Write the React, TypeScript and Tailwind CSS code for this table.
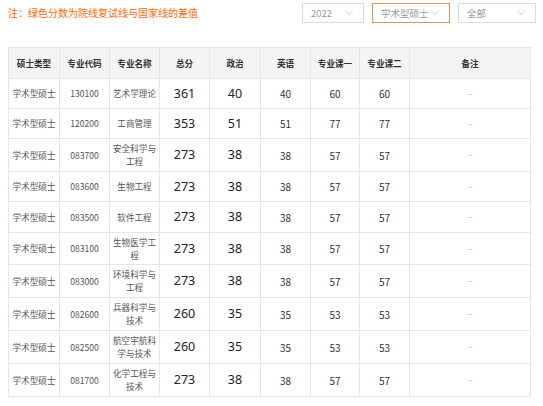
import type { ReactNode } from 'react';

const rows = [
  { code: '130100', name: '艺术学理论', total: 361, pol: 40, eng: 40, c1: 60, c2: 60, h: 'h-[30px]' },
  { code: '120200', name: '工商管理', total: 353, pol: 51, eng: 51, c1: 77, c2: 77, h: 'h-[30px]' },
  { code: '083700', name: '安全科学与工程', total: 273, pol: 38, eng: 38, c1: 57, c2: 57, h: 'h-[33px]' },
  { code: '083600', name: '生物工程', total: 273, pol: 38, eng: 38, c1: 57, c2: 57, h: 'h-[30px]' },
  { code: '083500', name: '软件工程', total: 273, pol: 38, eng: 38, c1: 57, c2: 57, h: 'h-[31px]' },
  { code: '083100', name: '生物医学工程', total: 273, pol: 38, eng: 38, c1: 57, c2: 57, h: 'h-[32px]' },
  { code: '083000', name: '环境科学与工程', total: 273, pol: 38, eng: 38, c1: 57, c2: 57, h: 'h-[33px]' },
  { code: '082600', name: '兵器科学与技术', total: 260, pol: 35, eng: 35, c1: 53, c2: 53, h: 'h-[33px]' },
  { code: '082500', name: '航空宇航科学与技术', total: 260, pol: 35, eng: 35, c1: 53, c2: 53, h: 'h-[33px]' },
  { code: '081700', name: '化学工程与技术', total: 273, pol: 38, eng: 38, c1: 57, c2: 57, h: 'h-[33px]' },
];

const headers = ['硕士类型', '专业代码', '专业名称', '总分', '政治', '英语', '专业课一', '专业课二', '备注'];
const widths = ['w-[51px]', 'w-[50px]', 'w-[50px]', 'w-[50px]', 'w-[51px]', 'w-[50px]', 'w-[49px]', 'w-[50px]', 'w-[121px]'];

function Chevron() {
  return (
    <svg width="8" height="6" viewBox="0 0 8 6" className="shrink-0">
      <polyline points="0.5,0.5 4,5 7.5,0.5" fill="none" stroke="#c8c8c8" strokeWidth="0.8" />
    </svg>
  );
}

function Select({ label, width, active }: { label: string; width: string; active?: boolean }) {
  return (
    <div
      className={`${width} flex h-[20px] items-center justify-between border bg-white pl-[8px] pr-[10px] text-[9.5px] text-[#999] ${
        active ? 'border-[#e8914a]' : 'border-[#dcdcdc]'
      }`}
    >
      <span>{label}</span>
      <Chevron />
    </div>
  );
}

function Cell({ children, className = '' }: { children: ReactNode; className?: string }) {
  return (
    <td className={`border border-[#e6e6e6] px-[3px] text-center align-middle ${className}`}>{children}</td>
  );
}

export default function App() {
  return (
    <main
      className="h-[406px] w-[543px] overflow-hidden bg-white pl-[8px] pr-[7px] pt-[3px]"
      style={{ fontFamily: '"Noto Sans CJK SC", "Noto Sans", sans-serif' }}
    >
      <div className="flex h-[20px] items-center justify-between">
        <p className="text-[10px] leading-none text-[#ff6600]">注：绿色分数为院线复试线与国家线的差值</p>
        <div className="flex gap-[8px]">
          <Select label="2022" width="w-[62px]" />
          <Select label="学术型硕士" width="w-[78px]" active />
          <Select label="全部" width="w-[78px]" />
        </div>
      </div>

      <table className="mt-[24px] w-[522px] table-fixed border-collapse">
        <colgroup>
          {widths.map((w, i) => (
            <col key={i} className={w} />
          ))}
        </colgroup>
        <thead>
          <tr className="h-[31px] bg-[#f4f4f4]">
            {headers.map((h) => (
              <th key={h} className="border border-[#e6e6e6] text-center text-[8.6px] font-bold text-[#333]">
                {h}
              </th>
            ))}
          </tr>
        </thead>
        <tbody>
          {rows.map((r) => (
            <tr key={r.code} className={r.h}>
              <Cell className="whitespace-nowrap text-[8.6px] text-[#555]">学术型硕士</Cell>
              <Cell className="text-[8.6px] text-[#555]">{r.code}</Cell>
              <Cell className="break-all text-[8.6px] leading-[13px] text-[#555]">{r.name}</Cell>
              <Cell className="text-[12.5px] text-[#222]">
                <span style={{ fontFamily: '"Noto Sans", sans-serif' }}>{r.total}</span>
              </Cell>
              <Cell className="text-[12.5px] text-[#222]">
                <span style={{ fontFamily: '"Noto Sans", sans-serif' }}>{r.pol}</span>
              </Cell>
              <Cell className="text-[10px] text-[#333]">{r.eng}</Cell>
              <Cell className="text-[10px] text-[#333]">{r.c1}</Cell>
              <Cell className="text-[10px] text-[#333]">{r.c2}</Cell>
              <Cell className="text-[8px] text-[#aaa]">--</Cell>
            </tr>
          ))}
        </tbody>
      </table>
    </main>
  );
}
